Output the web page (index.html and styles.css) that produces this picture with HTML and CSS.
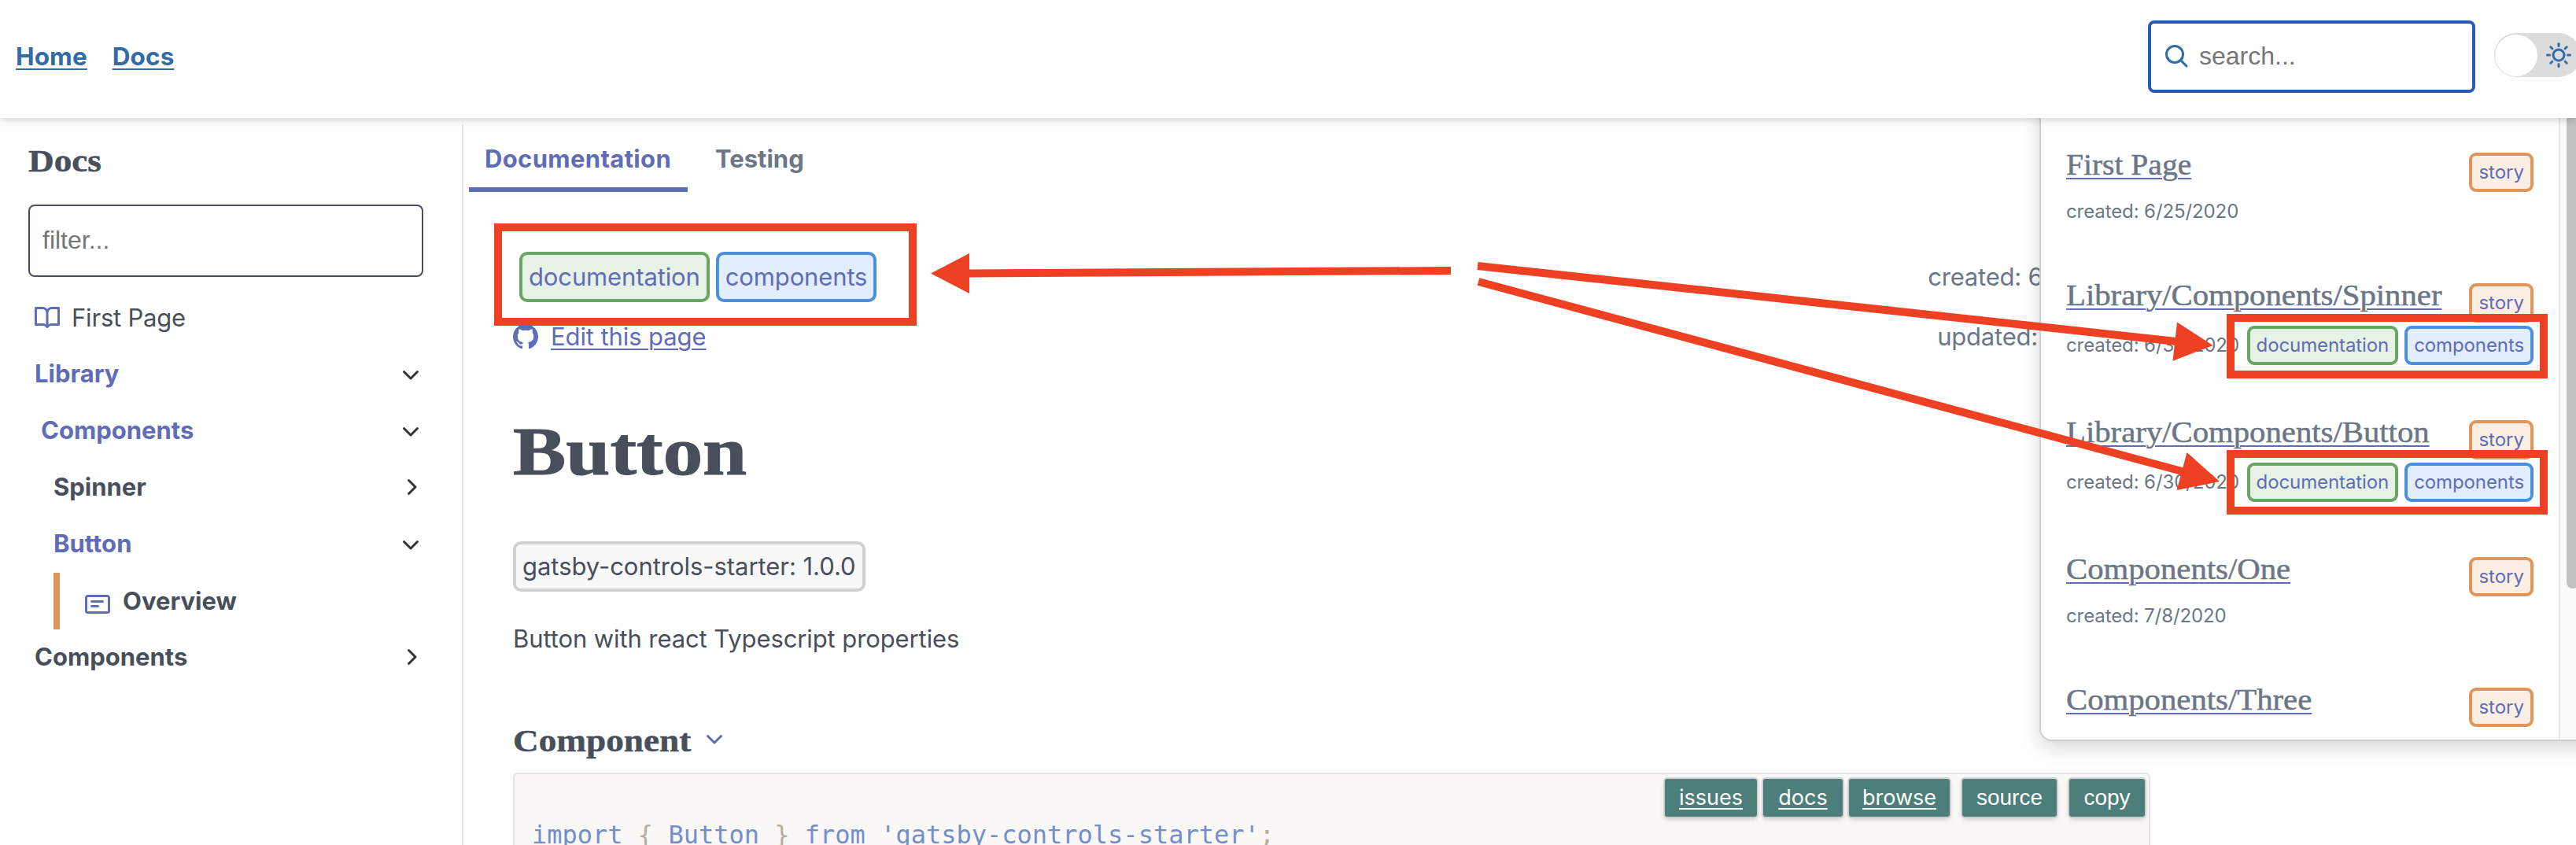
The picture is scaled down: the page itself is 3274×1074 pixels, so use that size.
FILE: index.html
```html
<!DOCTYPE html>
<html lang="en">
<head>
<meta charset="utf-8">
<title>Button - Docs</title>
<link rel="stylesheet" href="styles.css">
</head>
<body>
<svg class="sprite" aria-hidden="true">
  <symbol id="down" viewBox="0 0 16 16"><path d="M12.78 6.22a.75.75 0 010 1.06l-4.25 4.25a.75.75 0 01-1.06 0L3.22 7.28a.75.75 0 011.06-1.06L8 9.94l3.72-3.72a.75.75 0 011.06 0z"/></symbol>
  <symbol id="right" viewBox="0 0 16 16"><path d="M6.22 3.22a.75.75 0 011.06 0l4.25 4.25a.75.75 0 010 1.06l-4.25 4.25a.75.75 0 01-1.06-1.06L9.94 8 6.22 4.28a.75.75 0 010-1.06z"/></symbol>
  <symbol id="book" viewBox="0 0 16 16"><path fill-rule="evenodd" d="M0 1.75A.75.75 0 01.75 1h4.253c1.227 0 2.317.59 3 1.501A3.744 3.744 0 0111.006 1h4.245a.75.75 0 01.75.75v10.5a.75.75 0 01-.75.75h-4.507a2.25 2.25 0 00-1.591.659l-.622.621a.75.75 0 01-1.06 0l-.622-.621A2.25 2.25 0 005.258 13H.75a.75.75 0 01-.75-.75V1.75zm8.755 3a2.25 2.25 0 012.25-2.25H14.5v9h-3.757c-.71 0-1.4.201-1.992.572l.004-7.322zm-1.504 7.324l.004-5.073-.002-2.253A2.25 2.25 0 005.003 2.5H1.5v9h3.757a3.75 3.75 0 011.994.574z"/></symbol>
  <symbol id="note" viewBox="0 0 16 16"><path fill-rule="evenodd" d="M0 3.75C0 2.784.784 2 1.75 2h12.5c.966 0 1.75.784 1.75 1.75v8.5A1.75 1.75 0 0114.25 14H1.75A1.75 1.75 0 010 12.25v-8.5zm1.75-.25a.25.25 0 00-.25.25v8.5c0 .138.112.25.25.25h12.5a.25.25 0 00.25-.25v-8.5a.25.25 0 00-.25-.25H1.75zM3.5 6.25a.75.75 0 01.75-.75h7a.75.75 0 010 1.5h-7a.75.75 0 01-.75-.75zm.75 2.25a.75.75 0 000 1.5h4a.75.75 0 000-1.5h-4z"/></symbol>
  <symbol id="github" viewBox="0 0 16 16"><path fill-rule="evenodd" d="M8 0C3.58 0 0 3.58 0 8c0 3.54 2.29 6.53 5.47 7.59.4.07.55-.17.55-.38 0-.19-.01-.82-.01-1.49-2.01.37-2.53-.49-2.69-.94-.09-.23-.48-.94-.82-1.13-.28-.15-.68-.52-.01-.53.63-.01 1.08.58 1.23.82.72 1.21 1.87.87 2.33.66.07-.52.28-.87.51-1.07-1.78-.2-3.64-.89-3.64-3.95 0-.87.31-1.59.82-2.15-.08-.2-.36-1.02.08-2.12 0 0 .67-.21 2.2.82.64-.18 1.32-.27 2-.27.68 0 1.36.09 2 .27 1.53-1.04 2.2-.82 2.2-.82.44 1.1.16 1.92.08 2.12.51.56.82 1.27.82 2.15 0 3.07-1.87 3.75-3.65 3.95.29.25.54.73.54 1.48 0 1.07-.01 1.93-.01 2.2 0 .21.15.46.55.38A8.013 8.013 0 0016 8c0-4.42-3.58-8-8-8z"/></symbol>
</svg>

<header class="topbar">
  <nav class="topnav"><a href="#">Home</a><a href="#">Docs</a></nav>
  <label class="search">
    <svg class="search-icon" viewBox="0 0 32 32"><circle cx="13" cy="13" r="10.5"/><path d="M20.5 20.5L28 28"/></svg>
    <input class="search-input" type="text" placeholder="search...">
  </label>
  <div class="toggle">
    <span class="knob"></span>
    <svg class="sun" viewBox="0 0 32 32"><circle cx="16" cy="16" r="7"/><path d="M16 1.5v3M16 27.5v3M1.5 16h3M27.5 16h3M5.8 5.8l2 2M24.2 24.2l2 2M26.2 5.8l-2 2M7.8 24.2l-2 2"/></svg>
  </div>
</header>

<div class="page">
  <aside class="sidebar">
    <h3 class="side-title"><span class="wide">Docs</span></h3>
    <input class="filter" type="text" placeholder="filter...">
    <div class="row first"><svg class="icon accent"><use href="#book"/></svg><span>First Page</span></div>
    <div class="row bold active">Library<svg class="icon chev"><use href="#down"/></svg></div>
    <div class="row bold active level1">Components<svg class="icon chev"><use href="#down"/></svg></div>
    <div class="row bold level2">Spinner<svg class="icon chev"><use href="#right"/></svg></div>
    <div class="row bold active level2">Button<svg class="icon chev"><use href="#down"/></svg></div>
    <div class="row bold current"><svg class="icon accent"><use href="#note"/></svg><span>Overview</span></div>
    <div class="row bold last">Components<svg class="icon chev"><use href="#right"/></svg></div>
  </aside>

  <main class="main">
    <nav class="tabs"><a class="tab selected">Documentation</a><a class="tab">Testing</a></nav>
    <article class="content">
      <div class="meta tagline">
        <div class="tags"><span class="tag green">documentation</span><span class="tag blue">components</span></div>
        <span class="date">created: 6/30/2020</span>
      </div>
      <div class="meta">
        <a class="edit" href="#"><svg class="icon"><use href="#github"/></svg><span class="edit-label">Edit this page</span></a>
        <span class="date">updated: 7/8/2020</span>
      </div>
      <h1 class="title"><span class="wide">Button</span></h1>
      <span class="tag gray">gatsby-controls-starter: 1.0.0</span>
      <p class="lead">Button with react Typescript properties</p>
      <h3 class="section"><span class="wide section-label">Component</span><svg class="icon section-chev"><use href="#down"/></svg></h3>
      <div class="code">
        <div class="actions">
          <a class="action w-issues" href="#">issues</a><a class="action w-docs" href="#">docs</a><a class="action w-browse" href="#">browse</a>
          <button class="action w-source">source</button><button class="action w-copy">copy</button>
        </div>
        <pre class="source">import <i>{</i> Button <i>}</i> from 'gatsby-controls-starter'<i>;</i></pre>
      </div>
    </article>
  </main>
</div>

<section class="results">
  <div class="list">
    <article class="entry"><div class="entry-head"><a href="#" class="name n-first">First Page</a><span class="tag small orange">story</span></div>
      <div class="entry-meta"><span>created: 6/25/2020</span></div></article>
    <article class="entry"><div class="entry-head"><a href="#" class="name">Library/Components/Spinner</a><span class="tag small orange">story</span></div>
      <div class="entry-meta tagged"><span>created: 6/30/2020</span><div class="tags"><span class="tag small green">documentation</span><span class="tag small blue">components</span></div></div></article>
    <article class="entry"><div class="entry-head"><a href="#" class="name">Library/Components/Button</a><span class="tag small orange">story</span></div>
      <div class="entry-meta tagged"><span>created: 6/30/2020</span><div class="tags"><span class="tag small green">documentation</span><span class="tag small blue">components</span></div></div></article>
    <article class="entry"><div class="entry-head"><a href="#" class="name">Components/One</a><span class="tag small orange">story</span></div>
      <div class="entry-meta"><span>created: 7/8/2020</span></div></article>
    <article class="entry"><div class="entry-head"><a href="#" class="name">Components/Three</a><span class="tag small orange">story</span></div></article>
  </div>
  <div class="track"><div class="thumb"></div></div>
</section>

<svg class="notes" viewBox="0 0 3274 1074">
  <g class="frames">
    <rect x="633" y="289" width="527" height="120"/>
    <rect x="2835" y="404" width="398" height="72"/>
    <rect x="2835" y="577" width="398" height="72"/>
    <path d="M1844 344L1230 347.5M1878 338L2766 434M1879 358L2775 599.5"/>
  </g>
  <path d="M1183 347.5L1232 322V373zM2812.5 439L2767 409.5L2761.5 458.7zM2821 612L2779.5 575L2766.5 623z"/>
</svg>
</body>
</html>
```
FILE: styles.css
```css
* { box-sizing: border-box; }
body {
  margin: 0;
  height: 1074px;
  overflow: hidden;
  display: flex;
  flex-direction: column;
  position: relative;
  background: #fff;
  color: #484f5a;
  font: 31px/48px Inter, "Liberation Sans", sans-serif;
}
h1, h3, p, pre { margin: 0; }
h1, h3 { font-family: "Liberation Serif", serif; }
.wide { display: inline-block; transform: scaleX(1.16); transform-origin: left; -webkit-text-stroke: .012em; }
.sprite { display: none; }
.icon { width: 32px; height: 32px; fill: currentColor; flex: none; }
.accent { color: #5f6cb6; }

/* Top bar */
.topbar {
  height: 150px;
  flex: none;
  display: flex;
  align-items: center;
  position: relative;
  z-index: 3;
  padding: 0 0 6px 20px;
  background: #fff;
  box-shadow: 0 2px 10px rgba(0, 0, 0, .2);
}
.topnav { display: flex; gap: 32px; flex: 1; font-weight: 700; font-size: 31.5px; letter-spacing: .1px; }
.topnav a { color: #326ca8; text-underline-offset: 4px; text-decoration-thickness: 2px; }
.search {
  width: 416px;
  height: 92px;
  display: flex;
  align-items: center;
  gap: 12px;
  padding-left: 17px;
  border: 4px solid #285bb8;
  border-radius: 8px;
}
.search-icon { width: 32px; height: 32px; fill: none; stroke: #326ca8; stroke-width: 3; stroke-linecap: round; }
.search-input, .filter { border: 0; outline: 0; background: none; font: 32px "Liberation Sans", Arial, sans-serif; }
.search-input { width: 320px; padding: 0 0 2px; }
::placeholder { color: #757575; opacity: 1; }
.toggle {
  width: 110px;
  height: 56px;
  flex: none;
  display: flex;
  align-items: center;
  gap: 11px;
  margin: -4px -6px 0 24px;
  padding-left: 1px;
  border-radius: 28px;
  background: #dcdcdc;
}
.knob { width: 54px; height: 53px; border-radius: 50%; background: #fff; }
.sun { width: 32px; height: 32px; fill: none; stroke: #326ca8; stroke-width: 3; stroke-linecap: round; }

/* Sidebar */
.page { flex: 1; display: flex; padding-top: 8px; min-height: 0; }
.sidebar { width: 589px; flex: none; padding: 23px 49px 0 36px; border-right: 2px solid #e2e2e2; }
.side-title { font-size: 39px; margin-bottom: 31px; }
.filter { display: block; width: 502px; height: 92px; padding: 0 16px 2px; border: 2px solid #484f5a; border-radius: 8px; margin-bottom: 16px; }
.row { display: flex; align-items: center; height: 72px; padding-left: 8px; }
.first { height: 71px; gap: 15px; padding-top: 1px; letter-spacing: -.2px; }
.bold { font-weight: 700; }
.active { color: #5f6cb6; }
.level1 { padding-left: 16px; }
.level2 { padding-left: 32px; }
.chev { margin: 0 0 0 auto; color: #333; }
.current { margin: 1px 0 0 32px; padding-left: 32px; gap: 16px; border-left: 8px solid #e0965a; }
.current .icon { margin-top: 8px; }
.last { height: 70px; }

/* Main column */
.main { flex: 1; padding-left: 7px; min-width: 0; }
.tabs { display: flex; height: 86px; }
.tab { padding: 20px 20px 0; font-weight: 700; color: #6b7686; }
.tab + .tab { padding-left: 35px; }
.selected { width: 278px; color: #5f6cb6; border-bottom: 6px solid #5f6cb6; letter-spacing: .35px; }
.content { width: 2081px; margin-left: 56px; }
.meta { display: flex; justify-content: space-between; align-items: center; height: 40px; color: #6b7686; }
.date { letter-spacing: -.2px; }
.tagline { height: 64px; margin: 76px 0 24px; }
.tags { display: flex; gap: 8px; }
.tagline .tags { padding-left: 8px; letter-spacing: -.13px; }
.tag {
  display: inline-block;
  padding: 4px 8px;
  border: 4px solid;
  border-radius: 10px;
  color: #5f6cb6;
}
.green { border-color: #68a663; background: #e7f2e7; }
.blue { border-color: #4a90de; background: #e2edfd; }
.orange { border-color: #e0965a; background: #fbeee3; }
.gray { display: block; width: 448px; white-space: nowrap; letter-spacing: -.04px; border-color: #d0d0d0; background: #f8f8f8; color: #484f5a; }
.edit { display: flex; align-items: center; gap: 16px; color: #5f6cb6; text-decoration: none; }
.edit-label { letter-spacing: -.1px; text-decoration: underline 2px; text-underline-offset: 4px; }
.title { margin: 76px 0 64px; font-size: 87px; line-height: 100px; }
.lead { margin: 36px 0 82px; letter-spacing: -.1px; }
.section { display: flex; margin-bottom: 16px; font-size: 39px; }
.section-label { width: 240px; flex: none; }
.section-chev { margin-top: 4px; color: #5f6cb6; }
.code { height: 92px; overflow: hidden; border: 2px solid #e4e4e4; border-bottom: 0; border-radius: 6px 6px 0 0; background: #f9f8f6; }
.actions { display: flex; justify-content: flex-end; height: 53px; padding: 6px 5px 0 0; }
.action {
  height: 48px;
  padding: 0;
  border: 0;
  border-radius: 3px;
  margin-left: 8px;
  background: #4c7f7a;
  color: #fff;
  font: 27px/48px Inter, sans-serif;
  text-align: center;
  text-underline-offset: 4px;
  text-decoration-thickness: 2px;
  box-shadow: 0 0 0 2px #d2d0d0, 0 4px 6px rgba(0, 0, 0, .16);
}
button.action { margin-left: 16px; font: 28px/48px "Liberation Sans", sans-serif; }
.w-issues { width: 117px; }
.w-docs { width: 101px; }
.w-browse { width: 128px; }
.w-source { width: 120px; }
.w-copy { width: 96px; }
.source { padding-left: 22px; font: 32px/48px "DejaVu Sans Mono", monospace; color: #728fcb; }
.source i { font-style: normal; color: #b6ad9a; }

/* Search results menu */
.results {
  position: absolute;
  left: 2592px;
  top: 120px;
  width: 720px;
  height: 822px;
  z-index: 2;
  display: flex;
  overflow: hidden;
  border: 2px solid #d0d0d0;
  border-radius: 16px;
  background: #fff;
  box-shadow: 0 8px 24px rgba(0, 0, 0, .16);
}
.list { width: 658px; flex: none; padding: 72px 32px 0; }
.entry { padding-bottom: 70px; }
.entry-head { display: flex; align-items: flex-start; justify-content: space-between; height: 54px; }
.name {
  font: 38px/44px "Liberation Serif", serif;
  margin-top: -7px;
  transform: scaleX(1.072);
  transform-origin: left;
  -webkit-text-stroke: .5px;
  color: #6b7686;
  text-decoration: underline 2px #5f6cb6;
  text-underline-offset: 4px;
}
.n-first { transform: scaleX(1.04); }
.small { padding: 0 8px; border-radius: 9px; font-size: 24px; line-height: 42px; }
.entry-meta { display: flex; justify-content: space-between; align-items: center; height: 42px; font-size: 24px; letter-spacing: -.1px; color: #6b7686; }
.tagged { height: 50px; }
.track { width: 58px; flex: none; padding-left: 8px; border-left: 2px solid #e8e8e8; background: #fafafa; }
.thumb { width: 16px; height: 626px; border-radius: 8px; background: #c1c1c1; }

/* Annotation layer */
.notes { position: absolute; inset: 0; width: 3274px; height: 1074px; z-index: 5; fill: #ee4023; pointer-events: none; }
.frames { fill: none; stroke: #ee4023; stroke-width: 10; }
```
